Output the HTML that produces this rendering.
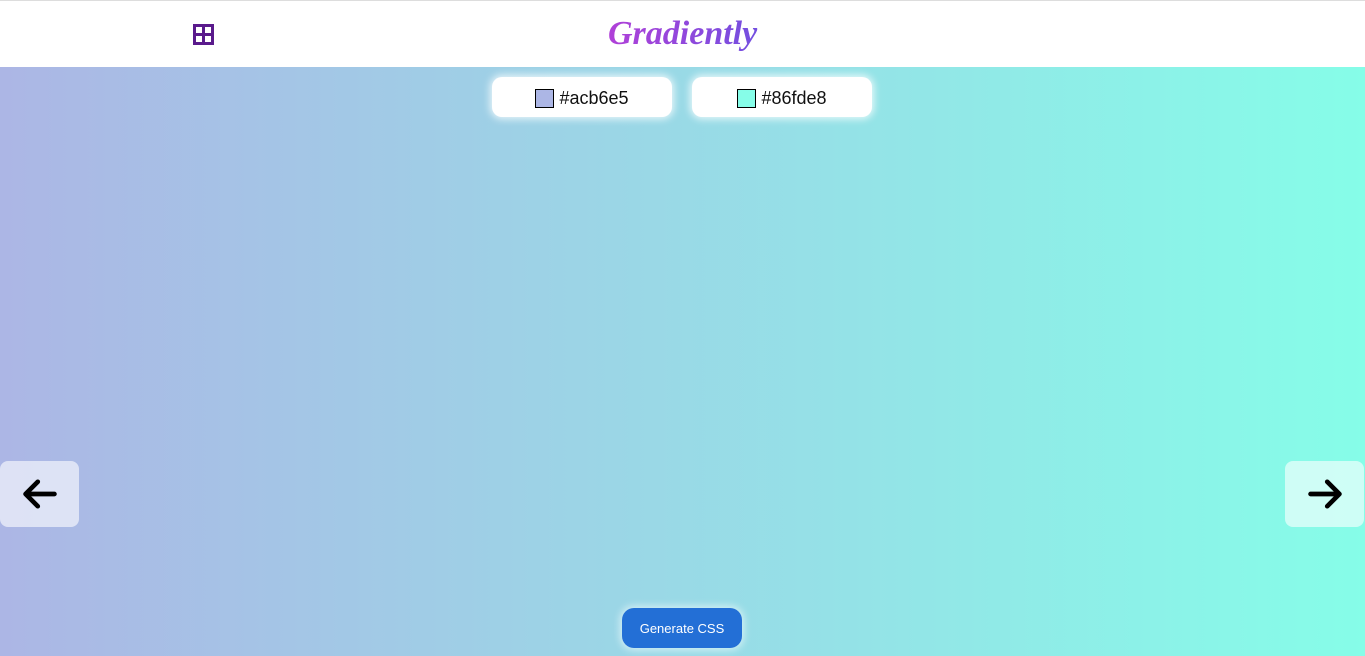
<!DOCTYPE html>
<html><head><style>
*{margin:0;padding:0;box-sizing:border-box}
body{width:1365px;height:656px;overflow:hidden;font-family:"Liberation Sans",sans-serif;position:relative;background:linear-gradient(to right,#acb6e5,#86fde8)}
.top{position:absolute;left:0;top:0;width:1365px;height:67px;background:#fff;border-top:1px solid #ddd}
.logo{position:absolute;left:608px;top:14px;padding-right:8px;font-family:"Liberation Serif",serif;font-style:italic;font-size:34px;background:linear-gradient(to right,#b040d8,#7050e0);-webkit-background-clip:text;background-clip:text;color:transparent;font-weight:bold}
.grid{position:absolute;left:193px;top:23px}
.chip{position:absolute;top:77px;width:180px;height:40px;background:#fff;border-radius:10px;box-shadow:0 0 8px 2px rgba(255,255,255,.8);font-family:"Liberation Sans",sans-serif;font-size:18px;color:#111;display:flex;align-items:center;justify-content:center;gap:5px;padding-top:2px}
.sw{width:19px;height:19px;border:1px solid #000}
.arr{position:absolute;top:461px;width:79px;height:66px;border-radius:8px;display:flex;align-items:center;justify-content:center}
.btn{position:absolute;left:622px;top:608px;width:120px;height:40px;background:#236fd6;border-radius:12px;color:#fff;font-size:13px;display:flex;align-items:center;justify-content:center;box-shadow:0 0 8px 2px rgba(255,255,255,.6)}
</style></head><body>
<div class="top">
<svg class="grid" width="21" height="21" viewBox="0 0 21 21"><rect x="1.5" y="1.5" width="18" height="18" fill="none" stroke="#5a1a8c" stroke-width="3"/><line x1="10.5" y1="1" x2="10.5" y2="20" stroke="#5a1a8c" stroke-width="3"/><line x1="1" y1="10.5" x2="20" y2="10.5" stroke="#5a1a8c" stroke-width="3"/></svg>
<div class="logo">Gradiently</div>
</div>
<div class="chip" style="left:492px"><div class="sw" style="background:#acb6e5"></div>#acb6e5</div>
<div class="chip" style="left:692px"><div class="sw" style="background:#86fde8"></div>#86fde8</div>
<div class="arr" style="left:0;background:rgba(255,255,255,.6)"><svg width="40" height="40" viewBox="0 0 36 36"><path d="M31 18H6M16 7L5 18l11 11" fill="none" stroke="#000" stroke-width="4.2" stroke-linecap="round" stroke-linejoin="round"/></svg></div>
<div class="arr" style="left:1285px;background:rgba(255,255,255,.6)"><svg width="40" height="40" viewBox="0 0 36 36"><path d="M5 18h25M20 7l11 11-11 11" fill="none" stroke="#000" stroke-width="4.2" stroke-linecap="round" stroke-linejoin="round"/></svg></div>
<div class="btn">Generate CSS</div>
</body></html>
